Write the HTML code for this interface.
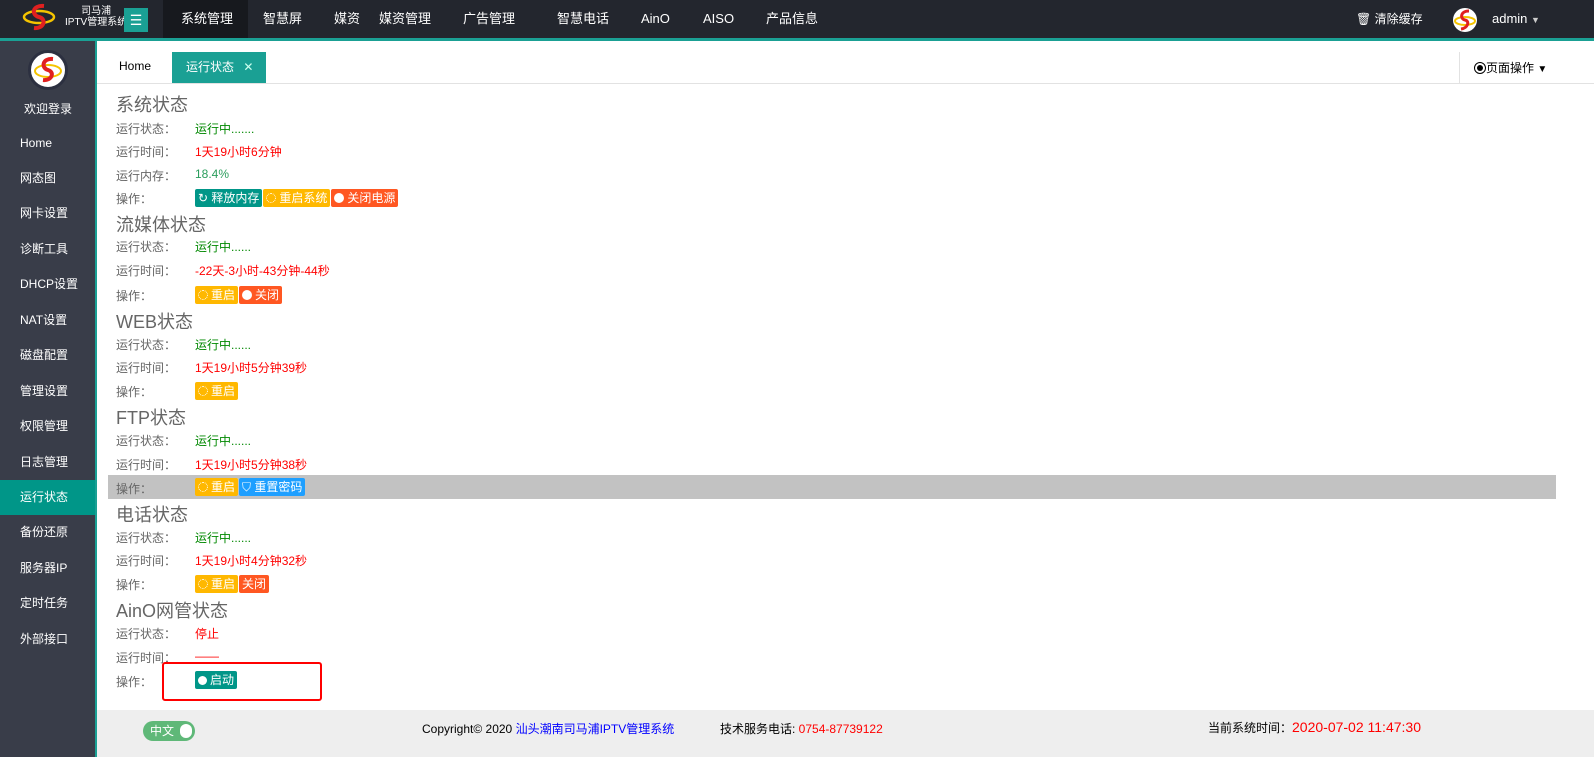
<!DOCTYPE html><html><head><meta charset="utf-8"><style>
*{margin:0;padding:0;box-sizing:border-box}
body{width:1594px;height:757px;overflow:hidden;font-family:"Liberation Sans","Noto Sans CJK SC",sans-serif;font-size:12px;background:#fff;position:relative}
.top{position:absolute;left:0;top:0;width:1594px;height:38px;background:#23262e}
.tline{position:absolute;left:0;top:38px;width:1594px;height:3px;background:#1aa094}
.nav{position:absolute;top:0;height:38px;line-height:38px;color:#fff;font-size:13px}
.side{position:absolute;left:0;top:41px;width:95px;height:716px;background:#393d49}
.sline{position:absolute;left:95px;top:41px;width:2px;height:716px;background:#1aa094}
.si{position:absolute;left:0;width:95px;height:35px;line-height:35px;padding-left:20px;color:#fff;font-size:12px}
.lab{position:absolute;left:116px;color:#666;font-size:12px}
.val{position:absolute;left:195px;font-size:12px}
.h{position:absolute;left:116px;color:#666;font-size:18px}
.g{color:#080}.r{color:#f00}.gg{color:#2a9d5c}
.btns{position:absolute;left:195px;display:flex;gap:1px}
.b{height:18px;line-height:18px;color:#fff;font-size:12px;padding:0 3px 0 3px;border-radius:2px;white-space:nowrap}
.teal{background:#009688}.yel{background:#ffb800}.org{background:#ff5722}.blu{background:#1e9fff}
.ic{display:inline-block;width:10px;height:10px;border-radius:50%;vertical-align:-1px;margin-right:3px}
</style></head><body>
<div class="top"></div>
<div style="position:absolute;left:22px;top:3px;width:34px;height:28px">
<svg width="34" height="28"><ellipse cx="17" cy="14" rx="15" ry="6" fill="none" stroke="#f5c400" stroke-width="2.5"/><path d="M22 3 C10 2 9 12 17 14 C25 16 22 26 12 25" fill="none" stroke="#e02020" stroke-width="4"/></svg></div>
<div style="position:absolute;left:65px;top:6px;color:#fff;font-size:10px;line-height:11px;text-align:center">司马浦<br>IPTV管理系统</div>
<div style="position:absolute;left:124px;top:8px;width:24px;height:24px;background:#1aa094;color:#fff;text-align:center;line-height:24px;font-size:14px">☰</div>
<div style="position:absolute;left:163px;top:0;width:85px;height:38px;background:#17191e"></div>
<div style="position:absolute;left:163px;top:38px;width:85px;height:3px;background:#5fb878"></div>
<div class="nav" style="left:181px">系统管理</div>
<div class="nav" style="left:263px">智慧屏</div>
<div class="nav" style="left:334px">媒资</div>
<div class="nav" style="left:379px">媒资管理</div>
<div class="nav" style="left:463px">广告管理</div>
<div class="nav" style="left:557px">智慧电话</div>
<div class="nav" style="left:641px">AinO</div>
<div class="nav" style="left:703px">AISO</div>
<div class="nav" style="left:766px">产品信息</div>
<div class="nav" style="left:1356px;font-size:12px">🗑 清除缓存</div>
<div style="position:absolute;left:1453px;top:8px;width:24px;height:24px;border-radius:50%;background:#fff;overflow:hidden"><svg width="24" height="24"><ellipse cx="12" cy="13" rx="10" ry="4" fill="none" stroke="#f5c400" stroke-width="2"/><path d="M16 3 C7 3 7 11 12 12 C17 13 15 20 8 21" fill="none" stroke="#e02020" stroke-width="3"/></svg></div>
<div class="nav" style="left:1492px;font-size:13px">admin <span style="font-size:9px;color:#ccc">▼</span></div>
<div class="tline"></div>
<div class="side"></div><div class="sline"></div>
<div style="position:absolute;left:28px;top:50px;width:40px;height:40px;border-radius:50%;background:#fff;border:3px solid #2c3040"><svg width="34" height="34"><ellipse cx="17" cy="18" rx="13" ry="6" fill="none" stroke="#f5c400" stroke-width="2"/><path d="M22 6 C11 5 10 15 17 17 C24 19 21 28 12 27" fill="none" stroke="#e02020" stroke-width="4"/></svg></div>
<div style="position:absolute;left:24px;top:100px;color:#fff;font-size:12px">欢迎登录</div>
<div class="si" style="top:126px">Home</div>
<div class="si" style="top:161px">网态图</div>
<div class="si" style="top:196px">网卡设置</div>
<div class="si" style="top:232px">诊断工具</div>
<div class="si" style="top:267px">DHCP设置</div>
<div class="si" style="top:303px">NAT设置</div>
<div class="si" style="top:338px">磁盘配置</div>
<div class="si" style="top:374px">管理设置</div>
<div class="si" style="top:409px">权限管理</div>
<div class="si" style="top:445px">日志管理</div>
<div class="si" style="top:480px;background:#009688">运行状态</div>
<div class="si" style="top:515px">备份还原</div>
<div class="si" style="top:551px">服务器IP</div>
<div class="si" style="top:586px">定时任务</div>
<div class="si" style="top:622px">外部接口</div>
<div style="position:absolute;left:97px;top:83px;width:1497px;height:1px;background:#e2e2e2"></div>
<div style="position:absolute;left:119px;top:59px;font-size:12px;color:#000">Home</div>
<div style="position:absolute;left:172px;top:52px;width:94px;height:31px;background:#1aa094;color:#fff;line-height:31px;padding-left:14px">运行状态 <span style="color:#cfe;margin-left:6px">✕</span></div>
<div style="position:absolute;left:1459px;top:52px;width:1px;height:31px;background:#e2e2e2"></div>
<div style="position:absolute;left:1474px;top:59px;font-size:12px;color:#000"><span style="display:inline-block;width:12px;height:12px;border:1px solid #000;border-radius:50%;vertical-align:-2px;position:relative"><i style="position:absolute;left:2px;top:2px;width:6px;height:6px;border-radius:50%;background:#000"></i></span>页面操作 <span style="font-size:10px">▼</span></div>

<div class="h" style="top:91px">系统状态</div>
<div class="lab" style="top:120px">运行状态：</div><div class="val g" style="top:120px">运行中.......</div>
<div class="lab" style="top:143px">运行时间：</div><div class="val r" style="top:143px">1天19小时6分钟</div>
<div class="lab" style="top:167px">运行内存：</div><div class="val gg" style="top:167px">18.4%</div>
<div class="lab" style="top:190px">操作：</div>
<div class="btns" style="top:189px"><span class="b teal">↻ 释放内存</span><span class="b yel"><i class="ic" style="border:1px dotted #fff"></i>重启系统</span><span class="b org"><i class="ic" style="background:#fff"></i>关闭电源</span></div>
<div class="h" style="top:211px">流媒体状态</div>
<div class="lab" style="top:238px">运行状态：</div><div class="val g" style="top:238px">运行中......</div>
<div class="lab" style="top:262px">运行时间：</div><div class="val r" style="top:262px">-22天-3小时-43分钟-44秒</div>
<div class="lab" style="top:287px">操作：</div>
<div class="btns" style="top:286px"><span class="b yel"><i class="ic" style="border:1px dotted #fff"></i>重启</span><span class="b org"><i class="ic" style="background:#fff"></i>关闭</span></div>
<div class="h" style="top:308px">WEB状态</div>
<div class="lab" style="top:336px">运行状态：</div><div class="val g" style="top:336px">运行中......</div>
<div class="lab" style="top:359px">运行时间：</div><div class="val r" style="top:359px">1天19小时5分钟39秒</div>
<div class="lab" style="top:383px">操作：</div>
<div class="btns" style="top:382px"><span class="b yel"><i class="ic" style="border:1px dotted #fff"></i>重启</span></div>
<div class="h" style="top:404px">FTP状态</div>
<div class="lab" style="top:432px">运行状态：</div><div class="val g" style="top:432px">运行中......</div>
<div class="lab" style="top:456px">运行时间：</div><div class="val r" style="top:456px">1天19小时5分钟38秒</div>
<div style="position:absolute;left:108px;top:475px;width:1448px;height:24px;background:#c2c2c2"></div>
<div class="lab" style="top:480px">操作：</div>
<div class="btns" style="top:478px"><span class="b yel"><i class="ic" style="border:1px dotted #fff"></i>重启</span><span class="b blu">⛉ 重置密码</span></div>
<div class="h" style="top:501px">电话状态</div>
<div class="lab" style="top:529px">运行状态：</div><div class="val g" style="top:529px">运行中......</div>
<div class="lab" style="top:552px">运行时间：</div><div class="val r" style="top:552px">1天19小时4分钟32秒</div>
<div class="lab" style="top:576px">操作：</div>
<div class="btns" style="top:575px"><span class="b yel"><i class="ic" style="border:1px dotted #fff"></i>重启</span><span class="b org">关闭</span></div>
<div class="h" style="top:597px">AinO网管状态</div>
<div class="lab" style="top:625px">运行状态：</div><div class="val r" style="top:625px">停止</div>
<div class="lab" style="top:649px">运行时间：</div><div class="val r" style="top:649px">——</div>
<div class="lab" style="top:673px">操作：</div>
<div class="btns" style="top:671px"><span class="b teal"><i class="ic" style="background:#fff;width:9px;height:9px"></i>启动</span></div>
<div style="position:absolute;left:162px;top:662px;width:160px;height:39px;border:2px solid #f00;border-radius:3px"></div>

<div style="position:absolute;left:97px;top:710px;width:1497px;height:47px;background:#eee"></div>
<div style="position:absolute;left:143px;top:721px;width:52px;height:20px;border-radius:10px;background:#5fb878;color:#fff;line-height:20px;padding-left:7px;font-size:12px">中文<i style="position:absolute;right:3px;top:3px;width:12px;height:14px;border-radius:7px;background:#fff"></i></div>
<div style="position:absolute;left:422px;top:720px;font-size:12px;color:#000">Copyright© 2020 <span style="color:#00f">汕头潮南司马浦IPTV管理系统</span></div>
<div style="position:absolute;left:720px;top:720px;font-size:12px;color:#000">技术服务电话: <span style="color:#f00">0754-87739122</span></div>
<div style="position:absolute;left:1208px;top:719px;font-size:12px;color:#000">当前系统时间：<span style="color:#f00;font-size:14px">2020-07-02 11:47:30</span></div>
</body></html>
